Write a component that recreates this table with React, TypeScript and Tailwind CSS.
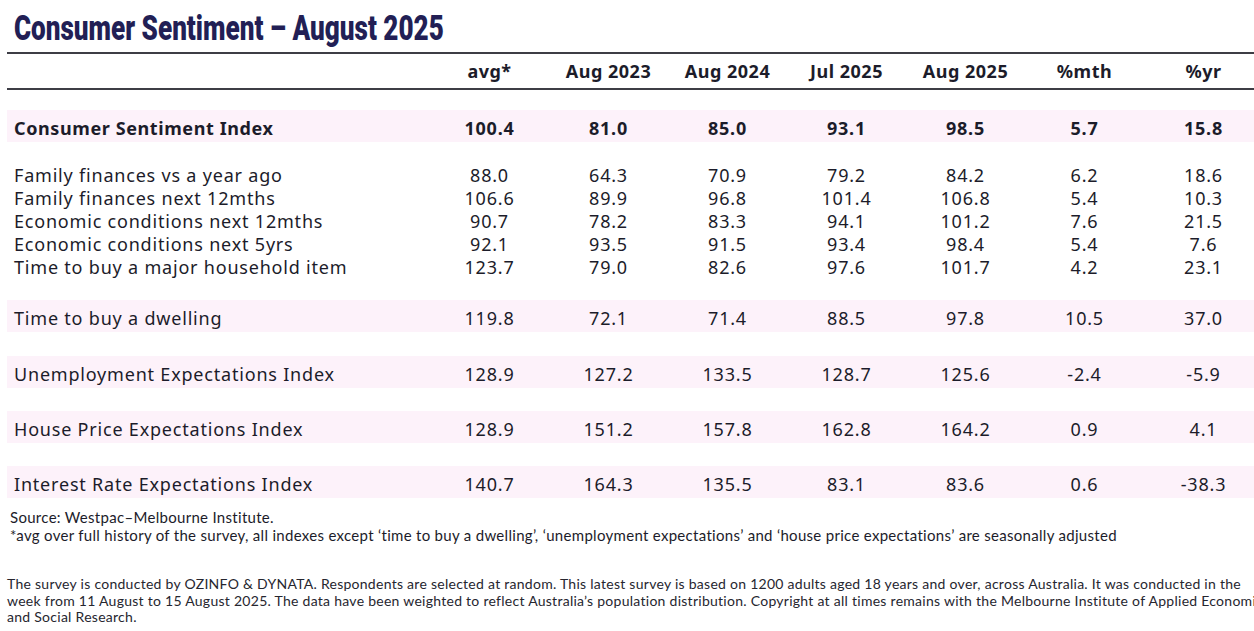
import React from "react";

type Row = { label: string; vals: string[] };

const family: Row[] = [
  { label: "Family finances vs a year ago", vals: ["88.0", "64.3", "70.9", "79.2", "84.2", "6.2", "18.6"] },
  { label: "Family finances next 12mths", vals: ["106.6", "89.9", "96.8", "101.4", "106.8", "5.4", "10.3"] },
  { label: "Economic conditions next 12mths", vals: ["90.7", "78.2", "83.3", "94.1", "101.2", "7.6", "21.5"] },
  { label: "Economic conditions next 5yrs", vals: ["92.1", "93.5", "91.5", "93.4", "98.4", "5.4", "7.6"] },
  { label: "Time to buy a major household item", vals: ["123.7", "79.0", "82.6", "97.6", "101.7", "4.2", "23.1"] },
];

const headers = ["avg*", "Aug 2023", "Aug 2024", "Jul 2025", "Aug 2025", "%mth", "%yr"];

function Cells({ vals, bold }: { vals: string[]; bold?: boolean }) {
  return (
    <>
      {vals.map((v, i) => (
        <div key={i} className={`w-[119px] text-center ${bold ? "font-bold" : ""}`}>
          {v}
        </div>
      ))}
    </>
  );
}

function BandRow({ row, bold, mt }: { row: Row; bold?: boolean; mt: string }) {
  return (
    <div className={`flex h-[32px] items-center bg-[#fdf2fa] pt-[4px] ${mt}`}>
      <div className={`w-[423px] pl-[7px] ${bold ? "font-bold tracking-[0.6px]" : ""}`}>{row.label}</div>
      <Cells vals={row.vals} bold={bold} />
    </div>
  );
}

export default function App() {
  return (
    <div className="w-[1254px] h-[631px] overflow-hidden bg-white">
      <div className="w-[1280px] text-[#1c1c2a]">
        <div className="h-[52px] pl-[14px] pt-[9px]">
          <div
            className="origin-left scale-x-[0.745] text-[35px] leading-[40px] font-black text-[#221f55] whitespace-nowrap"
            style={{ fontFamily: "Roboto, sans-serif" }}
          >
            Consumer Sentiment – August 2025
          </div>
        </div>
        <div
          className="ml-[7px] w-[1256px] text-[18px] tracking-[0.8px]"
          style={{ fontFamily: "'Noto Sans', sans-serif" }}
        >
          <div className="flex h-[38px] items-end pb-[3px] border-t-2 border-b-2 border-[#3d3d45] font-bold text-[18px] tracking-[0.5px]">
            <div className="w-[423px]" />
            {headers.map((h) => (
              <div key={h} className="w-[119px] text-center">
                {h}
              </div>
            ))}
          </div>

          <BandRow
            row={{ label: "Consumer Sentiment Index", vals: ["100.4", "81.0", "85.0", "93.1", "98.5", "5.7", "15.8"] }}
            bold
            mt="mt-[20px]"
          />

          <div className="mt-[22px] mb-[21px]">
            {family.map((r) => (
              <div key={r.label} className="flex h-[23px] items-center leading-[23px]">
                <div className="w-[423px] pl-[7px]">{r.label}</div>
                <Cells vals={r.vals} />
              </div>
            ))}
          </div>

          <BandRow
            row={{ label: "Time to buy a dwelling", vals: ["119.8", "72.1", "71.4", "88.5", "97.8", "10.5", "37.0"] }}
            mt="mt-0"
          />
          <BandRow
            row={{ label: "Unemployment Expectations Index", vals: ["128.9", "127.2", "133.5", "128.7", "125.6", "-2.4", "-5.9"] }}
            mt="mt-[24px]"
          />
          <BandRow
            row={{ label: "House Price Expectations Index", vals: ["128.9", "151.2", "157.8", "162.8", "164.2", "0.9", "4.1"] }}
            mt="mt-[23px]"
          />
          <BandRow
            row={{ label: "Interest Rate Expectations Index", vals: ["140.7", "164.3", "135.5", "83.1", "83.6", "0.6", "-38.3"] }}
            mt="mt-[23px]"
          />
        </div>

        <div
          className="mt-[10px] pl-[10px] text-[15px] leading-[18px] tracking-[0.3px] text-[#1c1c2a]"
          style={{ fontFamily: "Lato, sans-serif" }}
        >
          <div>Source: Westpac–Melbourne Institute.</div>
          <div>
            *avg over full history of the survey, all indexes except ‘time to buy a dwelling’, ‘unemployment expectations’ and ‘house price expectations’ are seasonally adjusted
          </div>
        </div>

        <div
          className="mt-[32px] pl-[7px] text-[14px] leading-[16.5px] tracking-[0.27px] text-[#26262f] whitespace-nowrap"
          style={{ fontFamily: "Lato, sans-serif" }}
        >
          <div>
            The survey is conducted by OZINFO &amp; DYNATA. Respondents are selected at random. This latest survey is based on 1200 adults aged 18 years and over, across Australia. It was conducted in the
          </div>
          <div>
            week from 11 August to 15 August 2025. The data have been weighted to reflect Australia’s population distribution. Copyright at all times remains with the Melbourne Institute of Applied Economic
          </div>
          <div>and Social Research.</div>
        </div>
      </div>
    </div>
  );
}
